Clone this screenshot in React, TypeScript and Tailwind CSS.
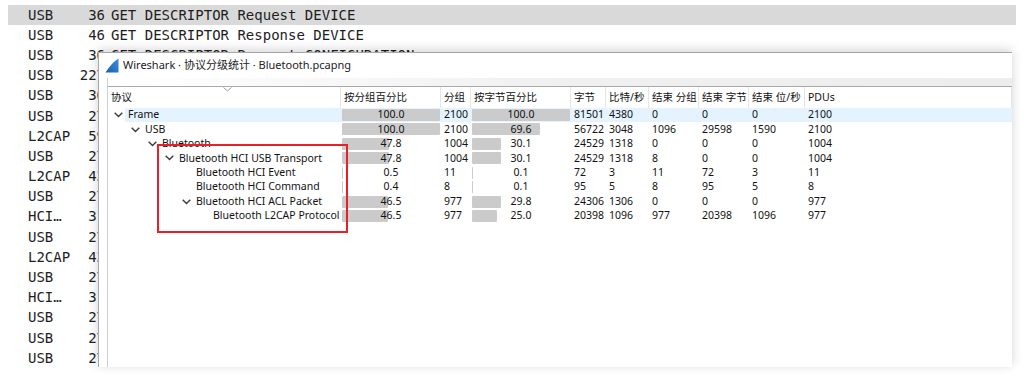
import React from "react";

type Row = {
  name: string;
  level: number;
  open: boolean;
  pp: number;
  pk: number;
  bp: number;
  bytes: number;
  bps: number;
  ep: number;
  eb: number;
  ebps: number;
  pdus: number;
};

// packet list behind the dialog
const packets = [
  { proto: "USB", len: "36", info: "GET DESCRIPTOR Request DEVICE" },
  { proto: "USB", len: "46", info: "GET DESCRIPTOR Response DEVICE" },
  { proto: "USB", len: "36", info: "GET DESCRIPTOR Request CONFIGURATION" },
  { proto: "USB", len: "227", info: "GET DESCRIPTOR Response CONFIGURATION" },
  { proto: "USB", len: "36", info: "SET CONFIGURATION Request" },
  { proto: "USB", len: "27", info: "SET CONFIGURATION Response" },
  { proto: "L2CAP", len: "59", info: "Rcvd Connection Request" },
  { proto: "USB", len: "27", info: "URB_BULK out" },
  { proto: "L2CAP", len: "43", info: "Sent Connection Response" },
  { proto: "USB", len: "27", info: "URB_BULK in" },
  { proto: "HCI…", len: "31", info: "Rcvd Number of Completed Packets" },
  { proto: "USB", len: "27", info: "URB_INTERRUPT in" },
  { proto: "L2CAP", len: "43", info: "Sent Configure Request" },
  { proto: "USB", len: "27", info: "URB_BULK in" },
  { proto: "HCI…", len: "31", info: "Rcvd Number of Completed Packets" },
  { proto: "USB", len: "27", info: "URB_INTERRUPT in" },
  { proto: "USB", len: "27", info: "URB_BULK out" },
  { proto: "USB", len: "27", info: "URB_BULK in" },
];

const rows: Row[] = [
  { name: "Frame", level: 0, open: true, pp: 100.0, pk: 2100, bp: 100.0, bytes: 81501, bps: 4380, ep: 0, eb: 0, ebps: 0, pdus: 2100 },
  { name: "USB", level: 1, open: true, pp: 100.0, pk: 2100, bp: 69.6, bytes: 56722, bps: 3048, ep: 1096, eb: 29598, ebps: 1590, pdus: 2100 },
  { name: "Bluetooth", level: 2, open: true, pp: 47.8, pk: 1004, bp: 30.1, bytes: 24529, bps: 1318, ep: 0, eb: 0, ebps: 0, pdus: 1004 },
  { name: "Bluetooth HCI USB Transport", level: 3, open: true, pp: 47.8, pk: 1004, bp: 30.1, bytes: 24529, bps: 1318, ep: 8, eb: 0, ebps: 0, pdus: 1004 },
  { name: "Bluetooth HCI Event", level: 4, open: false, pp: 0.5, pk: 11, bp: 0.1, bytes: 72, bps: 3, ep: 11, eb: 72, ebps: 3, pdus: 11 },
  { name: "Bluetooth HCI Command", level: 4, open: false, pp: 0.4, pk: 8, bp: 0.1, bytes: 95, bps: 5, ep: 8, eb: 95, ebps: 5, pdus: 8 },
  { name: "Bluetooth HCI ACL Packet", level: 4, open: true, pp: 46.5, pk: 977, bp: 29.8, bytes: 24306, bps: 1306, ep: 0, eb: 0, ebps: 0, pdus: 977 },
  { name: "Bluetooth L2CAP Protocol", level: 5, open: false, pp: 46.5, pk: 977, bp: 25.0, bytes: 20398, bps: 1096, ep: 977, eb: 20398, ebps: 1096, pdus: 977 },
];

// tree indent per level (17px steps)
const indent = ["w-[17px]", "w-[34px]", "w-[51px]", "w-[68px]", "w-[85px]", "w-[102px]"];

const headers = [
  { label: "按分组百分比", w: "w-[100px]" },
  { label: "分组", w: "w-[30px]" },
  { label: "按字节百分比", w: "w-[100px]" },
  { label: "字节", w: "w-[35px]" },
  { label: "比特/秒", w: "w-[43px]" },
  { label: "结束 分组", w: "w-[50px]" },
  { label: "结束 字节", w: "w-[50px]" },
  { label: "结束 位/秒", w: "w-[56px]" },
  { label: "PDUs", w: "w-[207px]" },
];

const Chevron = () => (
  <svg width="9" height="6" viewBox="0 0 9 6" className="block">
    <polyline points="0.7,0.7 4.5,4.6 8.3,0.7" fill="none" stroke="#3c3c3c" strokeWidth="1.4" />
  </svg>
);

const SharkFin = () => (
  <svg width="14" height="15" viewBox="0 0 14 15" className="block">
    <defs>
      <linearGradient id="fin" x1="0" y1="1" x2="1" y2="0">
        <stop offset="0" stopColor="#1b5fae" />
        <stop offset="1" stopColor="#3d8fe0" />
      </linearGradient>
    </defs>
    <path d="M0.5 14.5 C3 11 6.5 5 13.5 0.5 L13.5 14.5 Z" fill="url(#fin)" />
  </svg>
);

const PctCell = ({ value }: { value: number }) => (
  <div className="relative w-[100px] h-full flex items-center justify-center">
    <div
      className="absolute left-[1px] top-[1px] h-[12px] bg-[#cbcbcb] rounded-[1px]"
      style={{ width: `${Math.max(value * 0.98, 1)}px` }}
    />
    <span className="relative">{value.toFixed(1)}</span>
  </div>
);

const Cell = ({ w, children }: { w: string; children: React.ReactNode }) => (
  <div className={`${w} pl-[3px] h-full flex items-center`}>{children}</div>
);

export default function App() {
  return (
    <div className="relative w-[1024px] h-[381px] bg-white overflow-hidden">
      {/* packet list in the main window */}
      <div className="pt-[5px] font-['DejaVu_Sans_Mono',monospace] text-[14px] text-[#1e1e1e]">
        {packets.map((p, i) => (
          <div
            key={i}
            className={`mx-[8px] h-[20.2px] flex items-center whitespace-nowrap ${i === 0 ? "bg-[#d9d9d9]" : ""}`}
          >
            <span className="pl-[20px] w-[70px]">{p.proto}</span>
            <span className="w-[27px] text-right">{p.len}</span>
            <span className="pl-[6px]">{p.info}</span>
          </div>
        ))}
      </div>

      {/* Protocol Hierarchy dialog */}
      <div className="absolute left-[98px] top-[52px] w-[914px] h-[315px] bg-white border-l border-t border-[#a8a8a8] shadow-[0_-2px_10px_rgba(0,0,0,0.18)] flex flex-col font-['Noto_Sans','Noto_Sans_CJK_SC',sans-serif] text-[10.5px] text-[#111]">
        <div className="h-[25px] flex items-center pl-[6px] gap-[4px]">
          <SharkFin />
          <span className="text-[11px] text-[#222]">Wireshark · 协议分级统计 · Bluetooth.pcapng</span>
        </div>
        <div className="flex-1 flex pl-[8px]">
          <div className="flex-1 flex flex-col border-l border-[#cfcfcf]">
            <div className="h-[9px] bg-gradient-to-r from-white via-[#f0f0f0] to-[#ededed] border-b border-[#a9a9a9]" />
            {/* header */}
            <div className="relative h-[21px] flex">
              <div className="flex-1 pl-[3px] flex items-center border-r border-[#e6e6e6]">协议</div>
              {headers.map((h) => (
                <div key={h.label} className={`${h.w} pl-[3px] flex items-center border-r border-[#e6e6e6] whitespace-nowrap`}>
                  {h.label}
                </div>
              ))}
              <svg width="9" height="5" viewBox="0 0 9 5" className="absolute left-[115px] top-[0px]">
                <polyline points="0.5,0.5 4.5,4 8.5,0.5" fill="none" stroke="#9a9a9a" strokeWidth="1" />
              </svg>
            </div>
            {/* rows */}
            {rows.map((r, i) => (
              <div key={r.name} className="h-[14.43px] flex whitespace-nowrap">
                <div className={`${indent[r.level]} shrink-0 flex justify-end`}>
                  <div className="w-[17px] pl-[6px] flex items-center">{r.open && <Chevron />}</div>
                </div>
                <div className={`flex-1 flex ${i === 0 ? "bg-[#e5f3ff]" : ""}`}>
                  <div className="flex-1 pl-[3px] flex items-center">{r.name}</div>
                  <PctCell value={r.pp} />
                  <Cell w="w-[30px]">{r.pk}</Cell>
                  <PctCell value={r.bp} />
                  <Cell w="w-[35px]">{r.bytes}</Cell>
                  <Cell w="w-[43px]">{r.bps}</Cell>
                  <Cell w="w-[50px]">{r.ep}</Cell>
                  <Cell w="w-[50px]">{r.eb}</Cell>
                  <Cell w="w-[56px]">{r.ebps}</Cell>
                  <Cell w="w-[207px]">{r.pdus}</Cell>
                </div>
              </div>
            ))}
          </div>
        </div>
      </div>

      {/* red annotation box */}
      <div className="absolute left-[157px] top-[144px] w-[191px] h-[89px] border-2 border-[#e8202a]" />
    </div>
  );
}
